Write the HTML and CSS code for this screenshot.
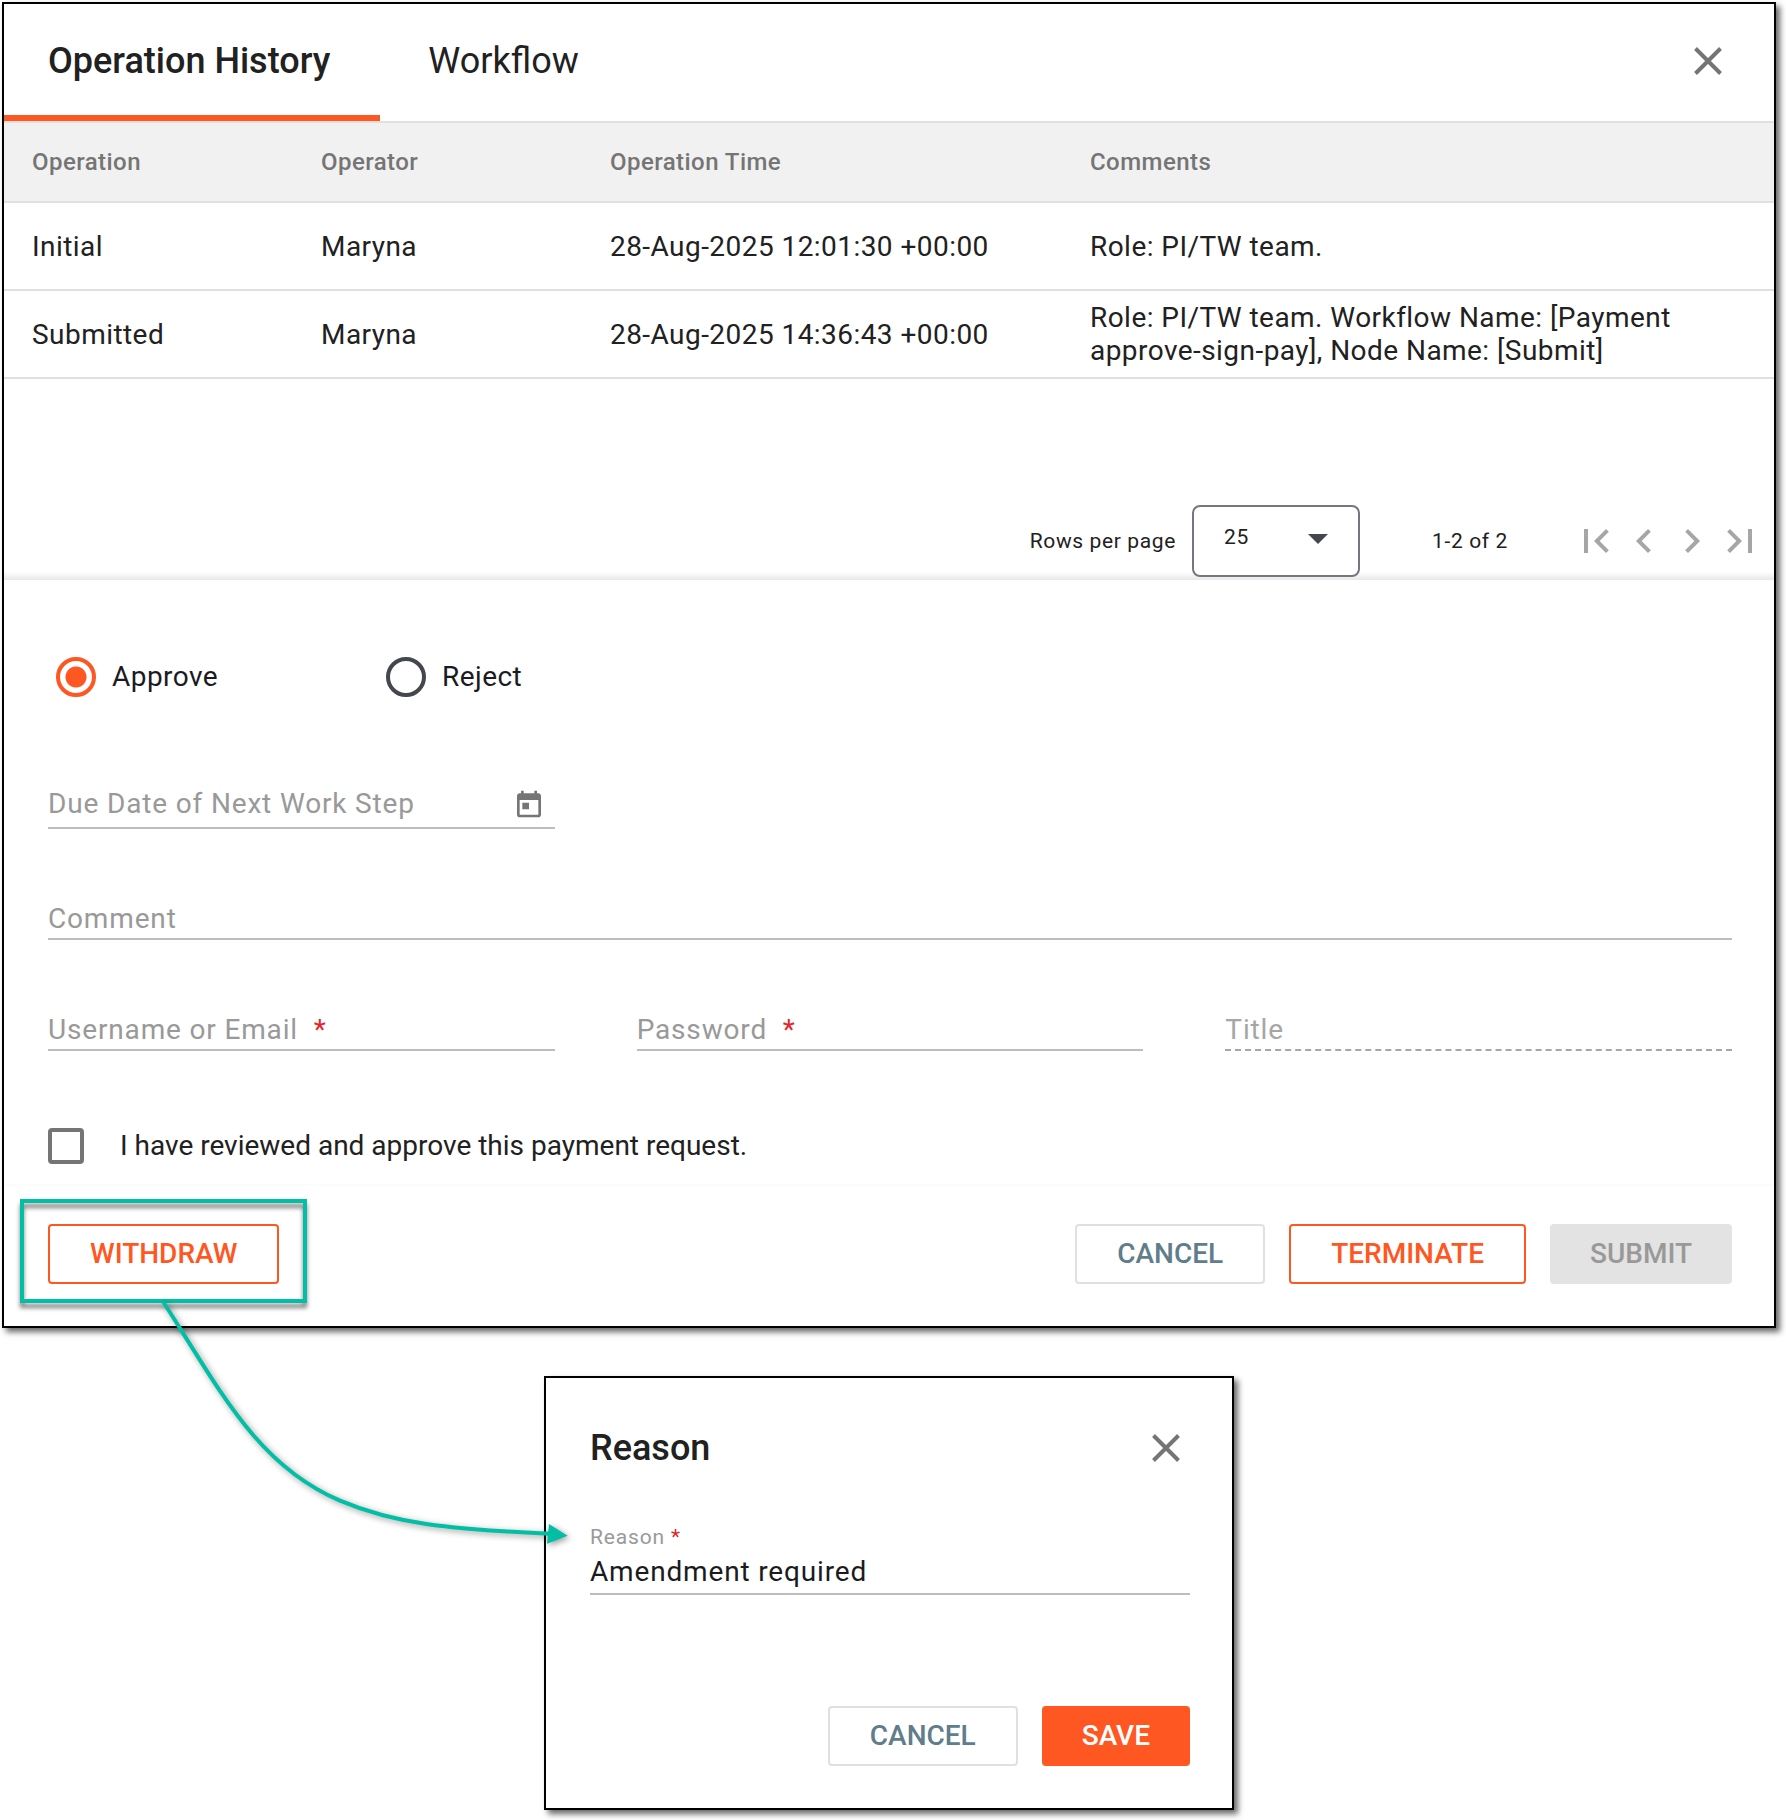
FILE: index.html
```
<!DOCTYPE html>
<html lang="en">
<head>
    <meta charset="utf-8">
    <title>Operation History</title>
    <link rel="stylesheet" href="styles.css">
</head>
<body>
<div class="page">
    <section class="dialog">
        <header class="tabs">
            <button type="button" class="tab active">Operation History</button>
            <button type="button" class="tab">Workflow</button>
            <button type="button" class="close" aria-label="Close">
                <svg width="28" height="28" viewBox="0 0 28 28"><path d="M1.5 1.5L26.5 26.5M26.5 1.5L1.5 26.5"/></svg>
            </button>
        </header>

        <table class="history">
            <colgroup>
                <col class="col-operation">
                <col class="col-operator">
                <col class="col-time">
                <col>
            </colgroup>
            <thead>
                <tr><th>Operation</th><th>Operator</th><th>Operation Time</th><th>Comments</th></tr>
            </thead>
            <tbody>
                <tr>
                    <td>Initial</td>
                    <td>Maryna</td>
                    <td>28-Aug-2025 12:01:30 +00:00</td>
                    <td>Role: PI/TW team.</td>
                </tr>
                <tr>
                    <td>Submitted</td>
                    <td>Maryna</td>
                    <td>28-Aug-2025 14:36:43 +00:00</td>
                    <td>Role: PI/TW team. Workflow Name: [Payment approve-sign-pay], Node Name: [Submit]</td>
                </tr>
            </tbody>
        </table>

        <div class="pagination">
            <label for="rows">Rows per page</label>
            <div class="select">
                <select id="rows">
                    <option>25</option>
                    <option>50</option>
                    <option>100</option>
                </select>
                <svg width="20" height="10" viewBox="0 0 20 10"><path d="M0 0H20L10 10Z"/></svg>
            </div>
            <span class="range">1-2 of 2</span>
            <button type="button" class="page-btn" aria-label="First page" disabled>
                <svg width="48" height="48" viewBox="0 0 24 24"><path d="M18.41 16.59L13.82 12l4.59-4.59L17 6l-6 6 6 6zM6 6h2v12H6z"/></svg>
            </button>
            <button type="button" class="page-btn" aria-label="Previous page" disabled>
                <svg width="48" height="48" viewBox="0 0 24 24"><path d="M15.41 7.41L14 6l-6 6 6 6 1.41-1.41L10.83 12z"/></svg>
            </button>
            <button type="button" class="page-btn" aria-label="Next page" disabled>
                <svg width="48" height="48" viewBox="0 0 24 24"><path d="M10 6L8.59 7.41 13.17 12l-4.58 4.59L10 18l6-6z"/></svg>
            </button>
            <button type="button" class="page-btn" aria-label="Last page" disabled>
                <svg width="48" height="48" viewBox="0 0 24 24"><path d="M5.59 7.41L10.18 12l-4.59 4.59L7 18l6-6-6-6zM16 6h2v12h-2z"/></svg>
            </button>
        </div>

        <form class="approval">
            <div class="options">
                <label class="option"><input type="radio" name="decision" checked>Approve</label>
                <label class="option"><input type="radio" name="decision">Reject</label>
            </div>

            <div class="fields">
                <div class="field date">
                    <label for="due">Due Date of Next Work Step</label>
                    <input type="text" id="due">
                    <svg width="32" height="32" viewBox="0 0 24 24"><path d="M19 4h-1V2h-2v2H8V2H6v2H5c-1.11 0-1.99.9-1.99 2L3 20c0 1.1.89 2 2 2h14c1.1 0 2-.9 2-2V6c0-1.1-.9-2-2-2zm0 16H5V9h14v11zM7 11h5v5H7z"/></svg>
                </div>
            </div>

            <div class="field">
                <label for="comment">Comment</label>
                <input type="text" id="comment">
            </div>

            <div class="fields">
                <div class="field">
                    <label for="username">Username or Email <span class="required">*</span></label>
                    <input type="text" id="username">
                </div>
                <div class="field">
                    <label for="password">Password <span class="required">*</span></label>
                    <input type="password" id="password">
                </div>
                <div class="field disabled">
                    <label for="title">Title</label>
                    <input type="text" id="title" disabled>
                </div>
            </div>

            <label class="confirm"><input type="checkbox">I have reviewed and approve this payment request.</label>
        </form>

        <footer class="actions">
            <div class="highlight"><button type="button" class="btn btn-outline">WITHDRAW</button></div>
            <button type="button" class="btn btn-cancel">CANCEL</button>
            <button type="button" class="btn btn-outline">TERMINATE</button>
            <button type="button" class="btn btn-submit" disabled>SUBMIT</button>
        </footer>
    </section>

    <section class="dialog reason">
        <header class="reason-header">
            <h2>Reason</h2>
            <button type="button" class="close" aria-label="Close">
                <svg width="28" height="28" viewBox="0 0 28 28"><path d="M1.5 1.5L26.5 26.5M26.5 1.5L1.5 26.5"/></svg>
            </button>
        </header>
        <div class="reason-field">
            <label for="reason">Reason <span class="required">*</span></label>
            <input type="text" id="reason" value="Amendment required">
        </div>
        <footer class="reason-actions">
            <button type="button" class="btn btn-cancel">CANCEL</button>
            <button type="button" class="btn btn-save">SAVE</button>
        </footer>
    </section>

    <!-- arrow from the withdraw button to the reason dialog -->
    <svg class="arrow" width="450" height="280" viewBox="0 0 1350 840">
        <path class="line" d="M70 66C240 330 350 555 600 662C760 730 920 748 1230 761"/>
        <path class="head" d="M1227 732L1283 767L1221 791Z"/>
    </svg>
</div>
</body>
</html>
```

FILE: styles.css
```
* {
    box-sizing: border-box;
}
body {
    margin: 0;
    background: white;
    color: #212121;
    font-family: Roboto, "Liberation Sans", sans-serif;
    font-size: 28px;
    line-height: 32px;
}
button, input, select {
    margin: 0;
    padding: 0;
    border: none;
    background: none;
    color: inherit;
    font: inherit;
    letter-spacing: inherit;
}
svg {
    display: block;
}
.page {
    position: relative;
    padding: 2px 10px 10px 2px;
}
.dialog {
    border: 2px solid black;
    background: white;
    box-shadow: 4px 4px 6px rgba(0,0,0,0.6);
}

/* tabs */
.tabs {
    display: flex;
    height: 119px;
    border-bottom: 2px solid #e0e0e0;
}
.tab {
    padding: 2px 50px 0 48px;
    border-bottom: 6px solid transparent;
    font-size: 36px;
    line-height: 40px;
}
.tab.active {
    padding-left: 44px;
    border-bottom-color: #ff5722;
    font-weight: 500;
}
.close {
    color: #757575;
}
.close path {
    fill: none;
    stroke: currentColor;
    stroke-width: 4;
}
.tabs .close {
    margin-left: auto;
    margin-right: 52px;
    padding-bottom: 4px;
}

/* history table */
.history {
    width: 100%;
    table-layout: fixed;
    border-collapse: separate;
    border-spacing: 0;
    letter-spacing: 0.016em;
}
.col-operation, .col-operator {
    width: 289px;
}
.col-time {
    width: 480px;
}
.history th, .history td {
    height: 88px;
    padding: 0 28px;
    border-bottom: 2px solid #e0e0e0;
    text-align: left;
}
.history th {
    height: 80px;
    background: #f1f1f1;
    color: #757575;
    font-size: 24px;
    font-weight: 500;
}
.history td {
    line-height: 33px;
}

/* pagination */
.pagination {
    display: flex;
    align-items: center;
    justify-content: flex-end;
    padding: 126px 10px 3px;
    background: linear-gradient(to top, #e8e8e8, white 8px);
    font-size: 21px;
    letter-spacing: 0.03em;
}
.select {
    position: relative;
    margin: 0 72px 0 16px;
}
.select select {
    width: 168px;
    height: 72px;
    padding: 0 30px 8px;
    border: 2px solid #74777f;
    border-radius: 8px;
    background: white;
    appearance: none;
}
.select svg {
    position: absolute;
    right: 32px;
    top: 29px;
    fill: #44474e;
}
.range {
    margin-right: 64px;
}
.page-btn {
    color: #a6a6a6;
}
.page-btn svg {
    fill: currentColor;
}

/* approval form */
.approval {
    padding: 77px 42px 20px 44px;
}
.options {
    display: flex;
    padding-left: 8px;
    margin-bottom: 90px;
    letter-spacing: 0.016em;
}
.option {
    display: flex;
    align-items: center;
    gap: 16px;
    width: 330px;
    color: #1b1b1f;
}
.option input {
    width: 40px;
    height: 40px;
    border: 4px solid #44474e;
    border-radius: 50%;
    appearance: none;
}
.option input:checked {
    border-color: #ff5722;
    background: radial-gradient(circle, #ff5722 10px, transparent 11px);
}
.fields {
    display: grid;
    grid-template-columns: repeat(3, 1fr);
    gap: 82px;
}
.field {
    position: relative;
    margin-bottom: 73px;
    letter-spacing: 0.03em;
}
.field label {
    position: absolute;
    left: 0;
    top: 1px;
    color: #999;
}
.field input {
    display: block;
    width: 100%;
    height: 38px;
    border-bottom: 2px solid #bdbdbd;
}
.date input {
    height: 42px;
}
.date svg {
    position: absolute;
    right: 10px;
    top: 1px;
    fill: #757575;
}
.disabled label {
    color: #a6a6a6;
}
.disabled input {
    border-bottom: 2px dashed #a6a6a6;
}
.required {
    margin-left: 8px;
    color: #e52528;
}
.confirm {
    display: flex;
    align-items: center;
    gap: 36px;
    padding-top: 4px;
}
.confirm input {
    width: 36px;
    height: 36px;
    border: 4px solid #757575;
    border-radius: 4px;
    appearance: none;
}

/* buttons */
.actions {
    display: flex;
    gap: 24px;
    padding: 38px 42px 42px 44px;
    border-top: 2px solid #fcfcfc;
}
.btn {
    height: 60px;
    padding: 0 40px;
    border-radius: 4px;
    font-weight: 500;
}
.btn-outline {
    border: 2px solid #ff5722;
    color: #ff5722;
}
.btn-cancel {
    border: 2px solid #e0e0e0;
    color: #607d8b;
}
.btn-submit {
    background: #e3e3e3;
    color: #999;
}
.btn-save {
    background: #ff5722;
    color: white;
}
.highlight {
    position: relative;
    margin-right: auto;
}
.highlight::after {
    content: "";
    position: absolute;
    inset: -25px -28px -19px;
    border: 4px solid #00bfa5;
    filter: drop-shadow(0 5px 2px rgba(0,0,0,0.5));
    pointer-events: none;
}

/* reason dialog */
.reason {
    max-width: 690px;
    margin: 48px 0 0 542px;
    padding: 42px;
    padding-left: 44px;
}
.reason-header {
    display: flex;
    align-items: center;
    justify-content: space-between;
    height: 56px;
    padding-right: 10px;
}
.reason h2 {
    margin: 0;
    font-size: 36px;
    line-height: 40px;
    font-weight: 500;
}
.reason-field {
    margin: 47px 0 111px;
    letter-spacing: 0.03em;
}
.reason-field label {
    display: block;
    color: #999;
    font-size: 21px;
    line-height: 28px;
}
.reason-field .required {
    margin-left: 0;
}
.reason-field input {
    display: block;
    width: 100%;
    height: 44px;
    padding-bottom: 2px;
    border-bottom: 2px solid #bdbdbd;
    color: #1b1b1f;
}
.reason-actions {
    display: flex;
    justify-content: flex-end;
    gap: 24px;
}

.arrow {
    position: absolute;
    left: 140px;
    top: 1280px;
    filter: drop-shadow(2px 2px 3px rgba(0,0,0,0.4));
    pointer-events: none;
}
.arrow .line {
    fill: none;
    stroke: #00bfa5;
    stroke-width: 12;
}
.arrow .head {
    fill: #00bfa5;
}
```
